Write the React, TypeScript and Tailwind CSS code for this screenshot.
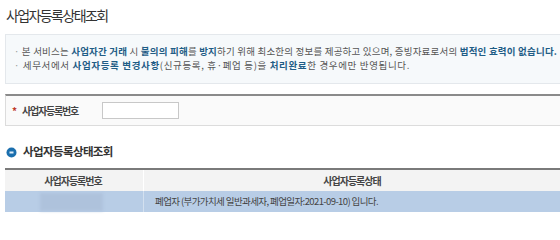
import React from "react";

const B = ({ children }: { children: React.ReactNode }) => (
  <span className="font-bold text-[#1f5d86]">{children}</span>
);

export default function App() {
  return (
    <div className="w-[560px] h-[220px] overflow-hidden bg-white font-['Noto_Sans_CJK_KR','Noto_Sans',sans-serif] text-[#444]">
      <div className="w-[580px] pl-[5px]">
        <h1 className="pt-[5px] pl-[1px] text-[14px] leading-[20px] tracking-[-1.6px] text-[#333] font-normal">
          사업자등록상태조회
        </h1>
        <div className="mt-[9px] h-[50px] border border-[#e4e8ec] bg-[#f6f9fb] pl-[8px] pb-[3px] flex flex-col justify-center text-[9.5px] leading-[14px] tracking-[0.2px] text-[#555]">
          <p>
            <span className="text-[#999]">·</span> 본 서비스는 <B>사업자간 거래</B> 시 <B>불의의 피해</B>를 <B>방지</B>하기 위해 최소한의 정보를 제공하고 있으며, 증빙자료로서의 <B>법적인 효력이 없습니다.</B>
          </p>
          <p className="tracking-[0.65px]">
            <span className="text-[#999]">·</span> 세무서에서 <B>사업자등록 변경사항</B>(신규등록, 휴·폐업 등)을 <B>처리완료</B>한 경우에만 반영됩니다.
          </p>
        </div>
        <div className="mt-[10px] h-[32px] border-t-2 border-t-[#8a8a8a] border-l border-b border-[#dcdcdc] bg-[#fafafa] flex items-center">
          <span className="ml-[6px] text-[10px] text-[#c0392b] font-bold w-[10px]">*</span>
          <span className="text-[10px] font-bold tracking-[-1.2px] text-[#444]">사업자등록번호</span>
          <div className="ml-[24px] w-[77px] h-[17px] border border-[#c8c8c8] bg-white" />
        </div>
        <div className="mt-[18px] flex items-center h-[16px]">
          <svg width="11" height="11" viewBox="0 0 11 11" className="ml-[1px]">
            <circle cx="5.5" cy="5.5" r="5" fill="#1b6fae" />
            <rect x="3.5" y="4.5" width="4" height="2" fill="#dfeefa" />
          </svg>
          <span className="ml-[6px] text-[11.5px] font-bold tracking-[-0.6px] text-[#333]">사업자등록상태조회</span>
        </div>
        <div className="mt-[8px] border-t-2 border-t-[#7a7a7a]">
          <div className="flex h-[21px] bg-[#f3f3f3] text-[10px] font-bold tracking-[-1px] text-[#444]">
            <div className="w-[139px] flex items-center justify-center border-r border-white pr-[2px]">사업자등록번호</div>
            <div className="flex-1 flex items-center justify-center pr-[20px]">사업자등록상태</div>
          </div>
          <div className="flex h-[21px] bg-[#b8cde6] text-[9.5px] tracking-[-0.6px] text-[#444]">
            <div className="w-[139px] flex items-center border-r border-[#d3e0ef]">
              <div className="ml-[35px] w-[63px] h-[18px] bg-[#aec2dc] blur-[1.5px]" />
            </div>
            <div className="flex-1 flex items-center pl-[11px]">
              폐업자 (부가가치세 일반과세자, 폐업일자:2021-09-10) 입니다.
            </div>
          </div>
        </div>
      </div>
    </div>
  );
}
